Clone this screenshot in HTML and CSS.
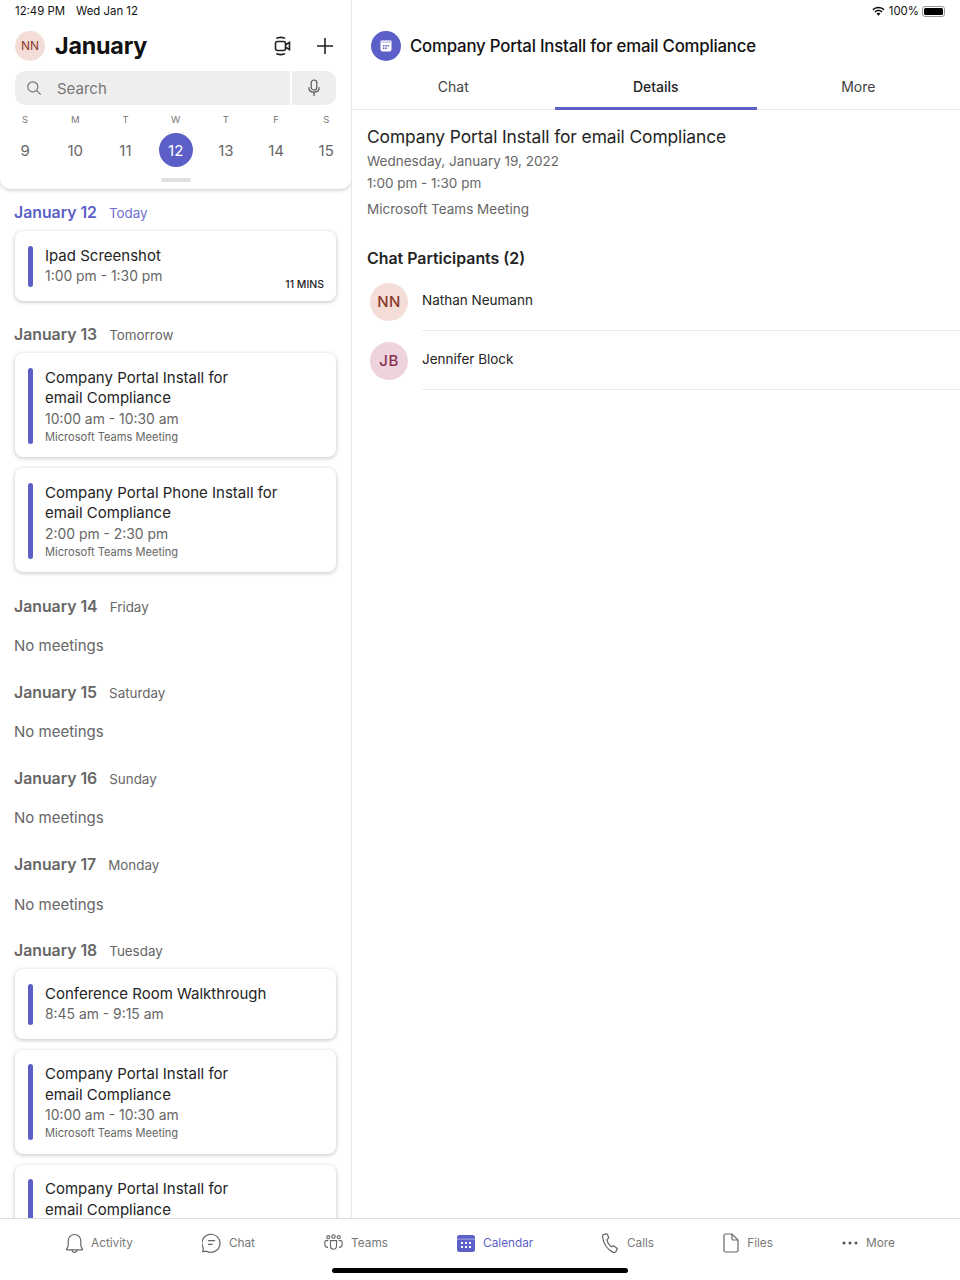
FILE: index.html
```html
<!DOCTYPE html>
<html lang="en">
<head>
    <meta charset="UTF-8">
    <meta name="viewport" content="width=device-width, initial-scale=1.0">
    <title>Calendar</title>
    <link rel="stylesheet" href="styles.css">
</head>
<body>
    <div class="main">
        <!-- Left column: agenda -->
        <div class="agenda">
            <div class="agenda-header">
                <div class="status-row">
                    <span>12:49 PM</span>
                    <span>Wed Jan 12</span>
                </div>
                <div class="title-row">
                    <div class="avatar avatar-small">NN</div>
                    <h1>January</h1>
                    <svg class="meet-icon" width="20" height="22" viewBox="0 0 20 22" fill="none" stroke="#222" stroke-width="1.6">
                        <path d="M3.5 3.6C4.5 2 11 2 12 3.6"/>
                        <path d="M3.5 18.4C4.5 20 11 20 12 18.4"/>
                        <rect x="2.5" y="6.5" width="10" height="9" rx="2"/>
                        <path d="M12.5 9.8l4-2.3v7l-4-2.3" />
                    </svg>
                    <svg class="plus-icon" width="20" height="20" viewBox="0 0 20 20" stroke="#222" stroke-width="1.6">
                        <path d="M10 2v16M2 10h16"/>
                    </svg>
                </div>
                <div class="search-row">
                    <div class="search-box">
                        <svg width="16" height="16" viewBox="0 0 16 16" fill="none" stroke="#777" stroke-width="1.2">
                            <circle cx="6.8" cy="6.8" r="5"/>
                            <path d="M10.5 10.5l4.2 4.2"/>
                        </svg>
                        <span>Search</span>
                    </div>
                    <div class="mic-box">
                        <svg width="14" height="18" viewBox="0 0 14 18" fill="none" stroke="#555" stroke-width="1.2">
                            <rect x="4.2" y="1" width="5.6" height="10" rx="2.8"/>
                            <path d="M1.8 8.2c0 3.2 2.2 5 5.2 5s5.200-1.800 5.200-5M7 13.200v3.800"/>
                        </svg>
                    </div>
                </div>
                <div class="week">
                    <div class="day"><small>S</small><span>9</span></div>
                    <div class="day"><small>M</small><span>10</span></div>
                    <div class="day"><small>T</small><span>11</span></div>
                    <div class="day active"><small>W</small><span>12</span></div>
                    <div class="day"><small>T</small><span>13</span></div>
                    <div class="day"><small>F</small><span>14</span></div>
                    <div class="day"><small>S</small><span>15</span></div>
                </div>
                <div class="handle"></div>
            </div>

            <div class="agenda-list">
                <div class="date-head today"><b>January 12</b><span>Today</span></div>
                <div class="card">
                    <div class="bar"></div>
                    <div class="card-body">
                        <div class="card-title">Ipad Screenshot</div>
                        <div class="card-time">1:00 pm - 1:30 pm</div>
                    </div>
                    <div class="mins">11 MINS</div>
                </div>

                <div class="date-head"><b>January 13</b><span>Tomorrow</span></div>
                <div class="card">
                    <div class="bar"></div>
                    <div class="card-body">
                        <div class="card-title">Company Portal Install for<br>email Compliance</div>
                        <div class="card-time">10:00 am - 10:30 am</div>
                        <div class="card-place">Microsoft Teams Meeting</div>
                    </div>
                </div>
                <div class="card">
                    <div class="bar"></div>
                    <div class="card-body">
                        <div class="card-title">Company Portal Phone Install for<br>email Compliance</div>
                        <div class="card-time">2:00 pm - 2:30 pm</div>
                        <div class="card-place">Microsoft Teams Meeting</div>
                    </div>
                </div>

                <div class="date-head"><b>January 14</b><span>Friday</span></div>
                <div class="no-meetings">No meetings</div>
                <div class="date-head"><b>January 15</b><span>Saturday</span></div>
                <div class="no-meetings">No meetings</div>
                <div class="date-head"><b>January 16</b><span>Sunday</span></div>
                <div class="no-meetings">No meetings</div>
                <div class="date-head"><b>January 17</b><span>Monday</span></div>
                <div class="no-meetings">No meetings</div>

                <div class="date-head"><b>January 18</b><span>Tuesday</span></div>
                <div class="card">
                    <div class="bar"></div>
                    <div class="card-body">
                        <div class="card-title">Conference Room Walkthrough</div>
                        <div class="card-time">8:45 am - 9:15 am</div>
                    </div>
                </div>
                <div class="card">
                    <div class="bar"></div>
                    <div class="card-body">
                        <div class="card-title">Company Portal Install for<br>email Compliance</div>
                        <div class="card-time">10:00 am - 10:30 am</div>
                        <div class="card-place">Microsoft Teams Meeting</div>
                    </div>
                </div>
                <div class="card">
                    <div class="bar"></div>
                    <div class="card-body">
                        <div class="card-title">Company Portal Install for<br>email Compliance</div>
                    </div>
                </div>
            </div>
        </div>

        <!-- Right column: meeting details -->
        <div class="details">
            <div class="status-right">
                <svg width="15" height="11" viewBox="0 0 14 11" fill="#111">
                    <path d="M7 2.300c2 0 3.800.8 5.100 2.100l1-1.100C11.500 1.700 9.400.7 7 .7S2.500 1.700.9 3.300l1 1.100C3.200 3.100 5 2.300 7 2.300z"/>
                    <path d="M7 5.200c1.200 0 2.300.5 3.100 1.300l1-1.100C10 4.300 8.600 3.700 7 3.700s-3 .6-4.100 1.700l1 1.100C4.700 5.700 5.800 5.200 7 5.200z"/>
                    <path d="M7 6.800c-.8 0-1.500.3-2 .8L7 9.800l2-2.200c-.5-.5-1.200-.8-2-.8z"/>
                </svg>
                <span>100%</span>
                <div class="battery"><div class="battery-fill"></div></div>
            </div>
            <div class="details-title">
                <div class="meeting-badge">
                    <svg width="12" height="12" viewBox="0 0 12 12">
                        <rect x="0.500" y="0.500" width="11" height="11" rx="2" fill="#fff"/>
                        <rect x="0.500" y="0.500" width="11" height="2.500" fill="#d5d5f0"/>
                        <path d="M3 5h1.500v1.500H3zM5.300 5h1.500v1.500H5.300zM7.600 5h1.500v1.500H7.600zM3 7.500h1.500V9H3zM5.300 7.500h1.500V9H5.300z" fill="#5b5fc7"/>
                    </svg>
                </div>
                <h2>Company Portal Install for email Compliance</h2>
            </div>
            <div class="tabs">
                <div class="tab">Chat</div>
                <div class="tab selected">Details</div>
                <div class="tab">More</div>
            </div>
            <div class="details-body">
                <div class="meeting-name">Company Portal Install for email Compliance</div>
                <div class="meeting-line">Wednesday, January 19, 2022</div>
                <div class="meeting-line">1:00 pm - 1:30 pm</div>
                <div class="meeting-line place">Microsoft Teams Meeting</div>
                <h3>Chat Participants (2)</h3>
                <div class="person">
                    <div class="avatar avatar-big">NN</div>
                    <div class="person-name">Nathan Neumann</div>
                </div>
                <div class="person">
                    <div class="avatar avatar-big pink">JB</div>
                    <div class="person-name">Jennifer Block</div>
                </div>
            </div>
        </div>
    </div>

    <!-- Bottom nav -->
    <div class="tabbar">
        <div class="nav-item">
            <svg width="17" height="20" viewBox="2.500 0.500 17 20" fill="none" stroke="#666" stroke-width="1.200">
                <path d="M3 16.500c1.200-1.300 1.700-2.300 1.700-4V8.300a6.300 6.300 0 0 1 12.600 0v4.200c0 1.700.5 2.700 1.700 4 .3.400.1.900-.4.900H3.400c-.5 0-.7-.5-.4-.9z"/>
                <path d="M8.500 17.500c.2 1.500 1.200 2.400 2.500 2.400s2.300-.9 2.500-2.400"/>
            </svg>
            <span>Activity</span>
        </div>
        <div class="nav-item">
            <svg width="19" height="19.500" viewBox="1.400 1.400 19 19" fill="none" stroke="#666" stroke-width="1.200">
                <path d="M2 19.800c.6-1.400.9-2.800.5-4A9 9 0 1 1 6 19.300c-1.200 0-2.600.5-4 .5z"/>
                <path d="M7.500 8.800h7M7.500 12.500h4.500"/>
            </svg>
            <span>Chat</span>
        </div>
        <div class="nav-item">
            <svg width="19" height="17.500" viewBox="0 0 22 20" fill="none" stroke="#666" stroke-width="1.300">
                <circle cx="5" cy="3.500" r="1.800"/>
                <circle cx="11" cy="2.800" r="2"/>
                <circle cx="17" cy="3.500" r="1.800"/>
                <path d="M7.500 7.500h7v6.500a3.500 3.500 0 0 1-7 0z"/>
                <path d="M5 7.500H2.500c-1 0-1.500.6-1.500 1.500v3c0 2 1.400 3.300 3.600 3.300M17 7.500h2.500c1 0 1.500.6 1.500 1.500v3c0 2-1.400 3.300-3.600 3.300"/>
            </svg>
            <span>Teams</span>
        </div>
        <div class="nav-item current">
            <svg width="18" height="17" viewBox="0 0 18 17">
                <rect y="0" width="18" height="17" rx="2.500" fill="#5b5fc7"/>
                <rect x="0" y="3.600" width="18" height="1" fill="#fff" opacity=".5"/>
                <path d="M4 7h2v2H4zM8 7h2v2H8zM12 7h2v2h-2zM4 11h2v2H4zM8 11h2v2H8zM12 11h2v2h-2z" fill="#fff"/>
            </svg>
            <span>Calendar</span>
        </div>
        <div class="nav-item">
            <svg width="16.500" height="20" viewBox="0.400 0.400 16 19" fill="none" stroke="#666" stroke-width="1.200">
                <path d="M2.300 1.600L4.500 1c.6-.1 1 .1 1.200.6l1 2.600c.2.500.1.900-.3 1.300L5.300 6.600c.4 2.700 2 5.400 4.300 7l1.500-.7c.5-.2.900-.1 1.300.2l2.400 1.900c.4.400.5.800.2 1.300l-1 1.700c-.7 1.100-2 1.400-3.200.8C5.300 15.900 1.900 10.200 1 4.300c-.2-1.300.2-2.300 1.300-2.700z"/>
            </svg>
            <span>Calls</span>
        </div>
        <div class="nav-item">
            <svg width="16" height="20" viewBox="0 0 16 20" fill="none" stroke="#666" stroke-width="1.200">
                <path d="M2.500 1h6.500l6 6v10.500a1.500 1.500 0 0 1-1.500 1.500h-11A1.500 1.500 0 0 1 1 17.500v-15A1.500 1.500 0 0 1 2.500 1z"/>
                <path d="M9 1v4.500a1.500 1.500 0 0 0 1.500 1.500H15"/>
            </svg>
            <span>Files</span>
        </div>
        <div class="nav-item">
            <svg width="16" height="4" viewBox="0 0 16 4" fill="#555">
                <circle cx="2" cy="2" r="1.500"/>
                <circle cx="8" cy="2" r="1.500"/>
                <circle cx="14" cy="2" r="1.500"/>
            </svg>
            <span>More</span>
        </div>
        <div class="home-bar"></div>
    </div>
</body>
</html>
```

FILE: styles.css
```css
* {
    box-sizing: border-box;
}

body {
    font-family: Inter, "Liberation Sans", sans-serif;
    margin: 0;
    width: 960px;
    height: 1280px;
    background-color: #fff;
    color: #242424;
    display: flex;
    flex-direction: column;
    overflow: hidden;
}

.main {
    flex: 1;
    min-height: 0;
    display: flex;
}

/* Agenda column */

.agenda {
    width: 352px;
    border-right: 1px solid #e8e8e8;
    display: flex;
    flex-direction: column;
    overflow: hidden;
}

.agenda-header {
    height: 189px;
    flex-shrink: 0;
    background-color: #fff;
    border-radius: 0 0 10px 10px;
    box-shadow: 0 1px 4px rgba(0, 0, 0, 0.22);
    padding: 0 15px;
    position: relative;
}

.status-row {
    height: 22px;
    display: flex;
    align-items: center;
    gap: 11px;
    font-size: 11.400px;
    color: #111;
}

.title-row {
    height: 47px;
    display: flex;
    align-items: center;
}

.title-row h1 {
    margin: 0 0 0 10px;
    font-size: 23.300px;
    font-weight: 700;
    color: #111;
    letter-spacing: -0.2px;
    flex: 1;
}

.meet-icon {
    margin-right: 22px;
}

.plus-icon {
    margin-right: 1px;
}

.avatar {
    border-radius: 50%;
    background-color: #f4ddd7;
    color: #8a3a2c;
    display: flex;
    align-items: center;
    justify-content: center;
    flex-shrink: 0;
}

.avatar-small {
    width: 30px;
    height: 30px;
    font-size: 12px;
}

.avatar-big {
    width: 38px;
    height: 38px;
    font-size: 15px;
    font-weight: 500;
    letter-spacing: 0.5px;
}

.avatar-big.pink {
    background-color: #eed3de;
    color: #85304f;
}

.search-row {
    height: 34px;
    margin-top: 2px;
    display: flex;
    gap: 2px;
}

.search-box {
    width: 275px;
    background-color: #eeeeee;
    border-radius: 10px 0 0 10px;
    display: flex;
    align-items: center;
    padding-left: 11px;
    gap: 15px;
    font-size: 15px;
    color: #777;
}

.mic-box {
    flex: 1;
    background-color: #eeeeee;
    border-radius: 0 10px 10px 0;
    display: flex;
    align-items: center;
    justify-content: center;
}

.week {
    display: flex;
    margin: 7px -15px 0 -15px;
}

.day {
    width: 50.200px;
    flex-shrink: 0;
    display: flex;
    flex-direction: column;
    align-items: center;
    color: #666;
}

.day small {
    height: 16px;
    line-height: 16px;
    font-size: 9.500px;
    color: #777;
}

.day span {
    width: 34px;
    height: 34px;
    margin-top: 5px;
    border-radius: 50%;
    display: flex;
    align-items: center;
    justify-content: center;
    font-size: 15px;
}

.day.active span {
    background-color: #5b5fc7;
    color: #fff;
}

.handle {
    position: absolute;
    left: 161px;
    top: 178px;
    width: 30px;
    height: 4px;
    border-radius: 2px;
    background-color: #e0e0e0;
}

.agenda-list {
    flex: 1;
    padding: 0 15px;
    overflow: hidden;
}

.date-head {
    height: 42px;
    margin-left: -1px;
    padding-top: 14px;
    display: flex;
    align-items: baseline;
    gap: 12px;
    font-size: 13.400px;
    color: #666;
    line-height: 20px;
}

.date-head b {
    font-size: 15.800px;
    font-weight: 600;
}

.date-head.today {
    color: #6d70cf;
}

.date-head.today b {
    color: #5b5fc7;
}

.card {
    display: flex;
    position: relative;
    background-color: #fff;
    border-radius: 8px;
    padding: 14.500px 13px 13.500px;
    margin-bottom: 10.500px;
    box-shadow: 0 1px 4px rgba(0, 0, 0, 0.25);
}

.card + .card {
    margin-top: 11px;
}

.bar {
    width: 5px;
    border-radius: 3px;
    background-color: #5b5fc7;
    margin-right: 12px;
    flex-shrink: 0;
}

.card-title {
    font-size: 15px;
    line-height: 20.500px;
    color: #242424;
}

.card-time {
    font-size: 13.900px;
    line-height: 21px;
    color: #666;
}

.card-place {
    font-size: 11.100px;
    line-height: 14px;
    color: #666;
}

.mins {
    position: absolute;
    right: 12px;
    bottom: 10px;
    font-size: 10.500px;
    font-weight: 500;
}

.no-meetings {
    height: 44.200px;
    margin-left: -1px;
    padding-top: 9.500px;
    font-size: 15px;
    line-height: 24px;
    color: #666;
}

/* Details column */

.details {
    flex: 1;
    min-width: 0;
}

.status-right {
    height: 22px;
    display: flex;
    align-items: center;
    justify-content: flex-end;
    padding-right: 15px;
    gap: 3px;
    font-size: 11.400px;
    color: #111;
}

.battery {
    width: 23px;
    height: 11px;
    border: 1px solid #999;
    border-radius: 3px;
    padding: 1px;
}

.battery-fill {
    height: 100%;
    background-color: #000;
    border-radius: 1.500px;
}

.details-title {
    height: 47px;
    display: flex;
    align-items: center;
    padding-left: 19px;
    gap: 9px;
}

.meeting-badge {
    width: 30px;
    height: 30px;
    border-radius: 50%;
    background-color: #5b5fc7;
    display: flex;
    align-items: center;
    justify-content: center;
}

.details-title h2 {
    margin: 0;
    font-size: 16.800px;
    font-weight: 500;
    color: #111;
    letter-spacing: -0.2px;
}

.tabs {
    height: 41px;
    display: flex;
    border-bottom: 1px solid #e8e8e8;
}

.tab {
    width: 202.500px;
    display: flex;
    align-items: center;
    justify-content: center;
    padding-bottom: 5px;
    font-size: 14px;
    color: #424242;
}

.tab.selected {
    font-weight: 500;
    color: #242424;
    border-bottom: 3px solid #5b5fc7;
    padding-bottom: 3px;
    height: 41px;
}

.details-body {
    padding: 15px 0 0 15px;
}

.meeting-name {
    font-size: 17.400px;
    line-height: 24px;
    margin-bottom: 1px;
    color: #242424;
    letter-spacing: -0.1px;
}

.meeting-line {
    font-size: 13.500px;
    line-height: 22px;
    color: #666;
}

.meeting-line.place {
    margin-top: 4px;
}

.details-body h3 {
    margin: 28px 0 0;
    font-size: 15.900px;
    line-height: 22px;
    font-weight: 600;
    color: #242424;
}

.person {
    height: 59px;
    display: flex;
    align-items: center;
    padding-left: 3px;
    gap: 14px;
}

h3 + .person {
    margin-top: 2px;
}

.person-name {
    flex: 1;
    height: 59px;
    display: flex;
    align-items: center;
    padding-bottom: 2px;
    font-size: 13.500px;
    color: #242424;
    border-bottom: 1px solid #ebebeb;
}

/* Bottom navigation */

.tabbar {
    height: 62px;
    flex-shrink: 0;
    background-color: #fff;
    border-top: 1px solid #dcdcdc;
    display: flex;
    justify-content: space-between;
    padding: 0 65px 0 66px;
    position: relative;
}

.nav-item {
    height: 48px;
    display: flex;
    align-items: center;
    gap: 8px;
    font-size: 11.800px;
    color: #777;
}

.nav-item.current {
    color: #5b5fc7;
}

.home-bar {
    position: absolute;
    left: 332px;
    bottom: 7px;
    width: 296px;
    height: 5px;
    border-radius: 3px;
    background-color: #000;
}
```
